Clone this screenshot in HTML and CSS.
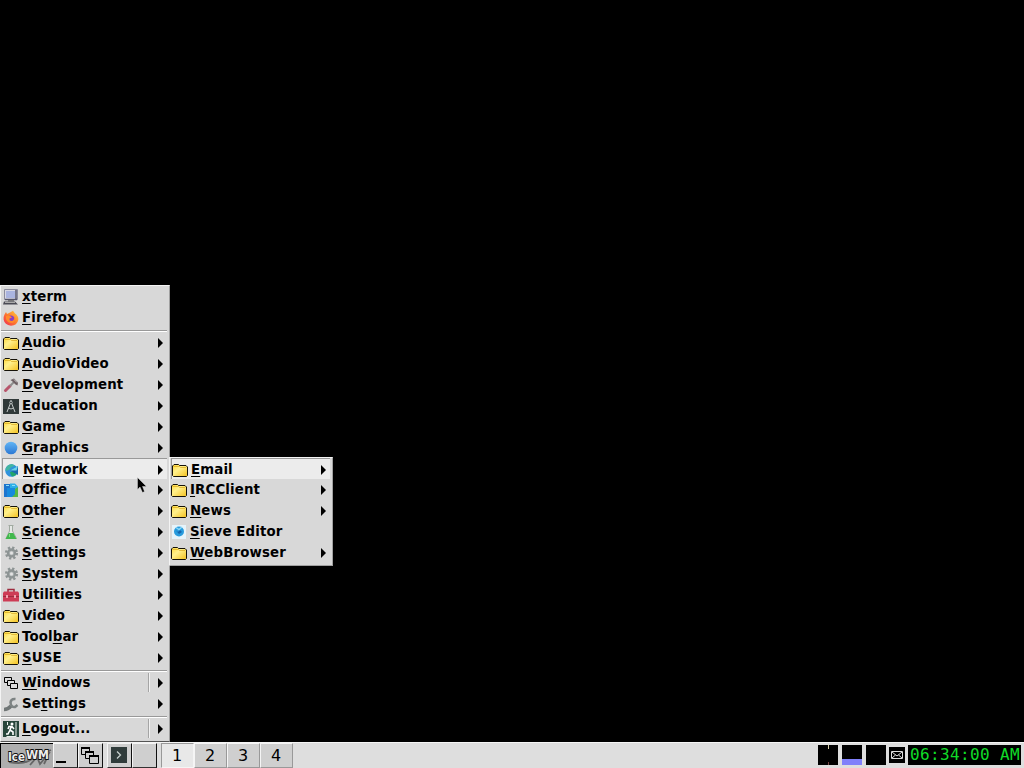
FILE: index.html
```html
<!DOCTYPE html>
<html lang="en">
<head>
    <meta charset="UTF-8">
    <meta name="viewport" content="width=device-width, initial-scale=1.0">
    <title>IceWM</title>
    <link rel="stylesheet" href="styles.css">
</head>
<body>

    <!-- Icon set -->
    <svg class="defs" width="0" height="0">
        <defs>
            <linearGradient id="yellow" x1="0" y1="0" x2="1" y2="1">
                <stop offset="0" stop-color="#ffd83a"/>
                <stop offset="0.4" stop-color="#fff08c"/>
                <stop offset="1" stop-color="#f4c01c"/>
            </linearGradient>
            <linearGradient id="blue" x1="0" y1="0" x2="0" y2="1">
                <stop offset="0" stop-color="#62b5f5"/>
                <stop offset="1" stop-color="#2b78d4"/>
            </linearGradient>
            <linearGradient id="fire" x1="1" y1="0" x2="0" y2="1">
                <stop offset="0" stop-color="#ffd33c"/>
                <stop offset="0.5" stop-color="#ff7a2c"/>
                <stop offset="1" stop-color="#ee2858"/>
            </linearGradient>
        </defs>
        <symbol id="folder" viewBox="0 0 16 16">
            <path d="M.5 13.500V4L2 2.500H6.500L7.500 3.500H14L15.500 5V13.500L14.500 14.500H1.500Z" fill="url(#yellow)" stroke="#15120a"/>
            <path d="M1.500 4.500H7.500L8.500 5.500H14" fill="none" stroke="#d9a81c" stroke-width=".700"/>
        </symbol>
        <symbol id="xterm" viewBox="0 0 16 16">
            <path d="M1.500.500H14.500V10.500H1.500Z" fill="#d8d8e4" stroke="#8b8b9c"/>
            <path d="M3 2H12V9H3Z" fill="#aab4e0"/>
            <path d="M13 1V10M2 10.500H14" stroke="#55556a" stroke-width="1.500"/>
            <path d="M5 11H11V12.500H5Z" fill="#777"/>
            <path d="M1 12.500H12L15 15.500H0Z" fill="#4a4a54"/>
            <path d="M2 13.500H12" stroke="#aaa"/>
        </symbol>
        <symbol id="firefox" viewBox="0 0 16 16">
            <path d="M1.500 4.500L3 2L4 4L7 2.500L10 .800L12 3.500Q15.800 6 15.300 10Q14 15.500 8 15.700Q1.500 15 .600 9.500Q.400 6.500 1.500 4.500Z" fill="url(#fire)"/>
            <circle cx="7.800" cy="9" r="3.600" fill="#8a3fc4"/>
            <path d="M3 6Q6 4.500 9 7.500L6.500 8.500Q6 11 9 11Q11.500 10.500 11 7Q13.500 11 9.500 13Q4.500 13.500 3 9Z" fill="#ff8a2c"/>
        </symbol>
        <symbol id="develop" viewBox="0 0 16 16">
            <path d="M2.500 13.500L7 9" stroke="#b8556c" stroke-width="3" stroke-linecap="round"/>
            <path d="M7 9L11 5" stroke="#8d8d8d" stroke-width="2"/>
            <path d="M7.500 3L11 1.500L15 5.500L14.500 8.500L12.500 7.500L9.500 4.500Z" fill="#6d6064"/>
            <path d="M11 2.500L14 5.500" stroke="#ccc"/>
        </symbol>
        <symbol id="education" viewBox="0 0 16 16">
            <path d="M0 1H16V16H0Z" fill="#303939"/>
            <path d="M8 2V4M7.500 5L4 14M8.500 5L12 14M5.500 10Q8 12 10.500 10" stroke="#c5caca" fill="none"/>
            <circle cx="8" cy="4.500" r="1.300" fill="#303939" stroke="#c5caca" stroke-width=".800"/>
        </symbol>
        <symbol id="graphics" viewBox="0 0 16 16">
            <circle cx="8" cy="8" r="6.300" fill="url(#blue)"/>
        </symbol>
        <symbol id="network" viewBox="0 0 16 16">
            <circle cx="7.500" cy="8.500" r="6.300" fill="#2f93dd"/>
            <path d="M1.500 7Q3 2.500 8 2L11 3.500L7 5.500L5 8L2 9Z" fill="#43b5a0"/>
            <path d="M8 14.500Q6 12 6 10L10 9L13.500 11Q12 14 8 14.500Z" fill="#22a56b"/>
            <path d="M6 8.500L14 4V13Z" fill="#1c6ab0"/>
            <path d="M6 8.500L14 4L12.500 8.500Z" fill="#6bd4ea"/>
        </symbol>
        <symbol id="office" viewBox="0 0 16 16">
            <path d="M1 2H7V15H1Z" fill="#1c75ce"/>
            <path d="M7 1.500H12L15 4.500V12H7Z" fill="#2daee8"/>
            <path d="M4 6H12V15H4Z" fill="#168ade"/>
            <path d="M12 7L15 5V15H9L12 12Z" fill="#55b846"/>
            <path d="M3 3.500H6M9 3.500H12" stroke="#8de0f6"/>
        </symbol>
        <symbol id="science" viewBox="0 0 16 16">
            <path d="M5.500 1.500H10.500M6.500 2V7L3 14.500H13.500L9.500 7V2" fill="#e6e9e6" stroke="#a1aaa1"/>
            <path d="M5.800 9H10.300L13.500 15H2.500Z" fill="#41b84d"/>
            <path d="M6.500 10V13" stroke="#83dc85"/>
        </symbol>
        <symbol id="gear" viewBox="0 0 16 16">
            <circle cx="8.500" cy="8" r="5.300" fill="none" stroke="#8d9494" stroke-width="2.600" stroke-dasharray="2.200 1.960"/>
            <circle cx="8.500" cy="8" r="3.500" fill="#b4baba" stroke="#8d9494" stroke-width="2.300"/>
            <circle cx="8.500" cy="8" r="1.500" fill="#e4e4e4"/>
        </symbol>
        <symbol id="toolbox" viewBox="0 0 16 16">
            <path d="M5 5V2.500H11V5" fill="none" stroke="#9d2b3e" stroke-width="1.500"/>
            <path d="M1 4.500H15L16 6V14.500H0V6Z" fill="#cd3c55"/>
            <path d="M0 9.500H16" stroke="#9d2b3e"/>
            <path d="M3 8H5V11H3ZM11 8H13V11H11Z" fill="#f0a3ae"/>
        </symbol>
        <symbol id="windows" viewBox="0 0 16 16">
            <path d="M1.500 2.500H8.500V7.500H1.500Z" fill="#ddd" stroke="#000"/>
            <path d="M4.500 5.500H11.500V10.500H4.500Z" fill="#ddd" stroke="#000"/>
            <path d="M7.500 8.500H14.500V13.500H7.500Z" fill="#ddd" stroke="#000"/>
        </symbol>
        <symbol id="wrench" viewBox="0 0 16 16">
            <path d="M1 13.500Q5 13.500 8 10" fill="none" stroke="#707676" stroke-width="3.500"/>
            <path d="M12.500 3Q8 2.500 7.500 6.500Q8 11.500 12 11L14.500 9" fill="none" stroke="#7d8383" stroke-width="2.500"/>
        </symbol>
        <symbol id="logout" viewBox="0 0 16 16">
            <path d="M0 0H16V16H0Z" fill="#28463b"/>
            <path d="M4.500 1V4M3.500 15.500H13.500M13 1V15" stroke="#e8eeea" fill="none"/>
            <circle cx="9" cy="3" r="1.500" fill="#fff"/>
            <path d="M8.500 5L7 9L10 11V14M7 9L5 13H3M5 8L6 5.500H9L11 8" stroke="#fff" stroke-width="1.600" fill="none"/>
        </symbol>
        <symbol id="sieve" viewBox="0 0 16 16">
            <path d="M1 1H15V15H1Z" fill="#e6f3fa"/>
            <circle cx="8" cy="7.500" r="5" fill="#279bdd"/>
            <path d="M4.500 6L7 8L9 6L11 8L8 10Z" fill="#1565ad"/>
            <path d="M5 3.500L8 5.500L11 3" stroke="#8bd8f8" stroke-width="1.500" fill="none"/>
        </symbol>
    </svg>

    <div class="desktop">

        <!-- Root menu -->
        <ul class="menu root-menu">
            <li class="item"><svg class="icon"><use href="#xterm"/></svg><span class="label"><u>x</u>term</span></li>
            <li class="item"><svg class="icon"><use href="#firefox"/></svg><span class="label"><u>F</u>irefox</span></li>
            <li class="separator"></li>
            <li class="item sub"><svg class="icon"><use href="#folder"/></svg><span class="label"><u>A</u>udio</span></li>
            <li class="item sub"><svg class="icon"><use href="#folder"/></svg><span class="label"><u>A</u>udioVideo</span></li>
            <li class="item sub"><svg class="icon"><use href="#develop"/></svg><span class="label"><u>D</u>evelopment</span></li>
            <li class="item sub"><svg class="icon"><use href="#education"/></svg><span class="label"><u>E</u>ducation</span></li>
            <li class="item sub"><svg class="icon"><use href="#folder"/></svg><span class="label"><u>G</u>ame</span></li>
            <li class="item sub"><svg class="icon"><use href="#graphics"/></svg><span class="label"><u>G</u>raphics</span></li>
            <li class="item sub active"><svg class="icon"><use href="#network"/></svg><span class="label"><u>N</u>etwork</span></li>
            <li class="item sub"><svg class="icon"><use href="#office"/></svg><span class="label"><u>O</u>ffice</span></li>
            <li class="item sub"><svg class="icon"><use href="#folder"/></svg><span class="label"><u>O</u>ther</span></li>
            <li class="item sub"><svg class="icon"><use href="#science"/></svg><span class="label"><u>S</u>cience</span></li>
            <li class="item sub"><svg class="icon"><use href="#gear"/></svg><span class="label"><u>S</u>ettings</span></li>
            <li class="item sub"><svg class="icon"><use href="#gear"/></svg><span class="label"><u>S</u>ystem</span></li>
            <li class="item sub"><svg class="icon"><use href="#toolbox"/></svg><span class="label"><u>U</u>tilities</span></li>
            <li class="item sub"><svg class="icon"><use href="#folder"/></svg><span class="label"><u>V</u>ideo</span></li>
            <li class="item sub"><svg class="icon"><use href="#folder"/></svg><span class="label">Tool<u>b</u>ar</span></li>
            <li class="item sub"><svg class="icon"><use href="#folder"/></svg><span class="label"><u>S</u>USE</span></li>
            <li class="separator"></li>
            <li class="item sub split"><svg class="icon"><use href="#windows"/></svg><span class="label"><u>W</u>indows</span></li>
            <li class="item sub"><svg class="icon"><use href="#wrench"/></svg><span class="label">Se<u>t</u>tings</span></li>
            <li class="separator"></li>
            <li class="item sub split"><svg class="icon"><use href="#logout"/></svg><span class="label"><u>L</u>ogout...</span></li>
        </ul>

        <!-- Network submenu -->
        <ul class="menu network-menu">
            <li class="item sub active"><svg class="icon"><use href="#folder"/></svg><span class="label"><u>E</u>mail</span></li>
            <li class="item sub"><svg class="icon"><use href="#folder"/></svg><span class="label"><u>I</u>RCClient</span></li>
            <li class="item sub"><svg class="icon"><use href="#folder"/></svg><span class="label"><u>N</u>ews</span></li>
            <li class="item"><svg class="icon"><use href="#sieve"/></svg><span class="label"><u>S</u>ieve Editor</span></li>
            <li class="item sub"><svg class="icon"><use href="#folder"/></svg><span class="label"><u>W</u>ebBrowser</span></li>
        </ul>

        <svg class="cursor" width="11" height="17" viewBox="0 0 11 17">
            <path d="M.500.500V12.500L3 10L5.500 15.500L7.500 14.500L5.500 9.500H9.500Z" fill="#000" stroke="#eee" stroke-width=".400"/>
        </svg>
    </div>

    <div class="taskbar">
        <div class="start">
            <svg width="47" height="22" viewBox="0 0 47 22">
                <path d="M3 17Q18 20 26 14Q34 9 45 5M24 20L31 12L34 19L44 7M38 19L41 13" fill="none" stroke="#666" stroke-width="1.800"/>
                <text class="logo" x="2" y="16" textLength="17" lengthAdjust="spacingAndGlyphs">Ice</text>
                <text class="logo" x="20" y="14" textLength="23" lengthAdjust="spacingAndGlyphs">WM</text>
            </svg>
        </div>
        <div class="tool"><svg width="23" height="23"><path d="M2 18H12" stroke="#000" stroke-width="2"/></svg></div>
        <div class="tool">
            <svg width="23" height="23">
                <path d="M2.500 3.500H10.500V10.500H2.500Z" fill="#d0d0d0" stroke="#000"/>
                <path d="M6.500 7.500H14.500V14.500H6.500Z" fill="#d0d0d0" stroke="#000"/>
                <path d="M10.500 11.500H19.500V19.500H10.500Z" fill="#d0d0d0" stroke="#000"/>
                <path d="M2 4H11M6 8H15M10 12H20" stroke="#000" stroke-width="2"/>
            </svg>
        </div>
        <div class="tool gap">
            <svg width="23" height="23">
                <path d="M3 3H19V19H3Z" fill="#303c3b"/>
                <path d="M9 7.500L12.500 11L9 14.500" fill="none" stroke="#c6d0cd" stroke-width="1.300"/>
            </svg>
        </div>
        <div class="tool"></div>
        <div class="workspaces">
            <div class="workspace current">1</div>
            <div class="workspace">2</div>
            <div class="workspace">3</div>
            <div class="workspace">4</div>
        </div>
        <div class="tray">
            <div class="monitor cpu"></div>
            <div class="monitor memory"></div>
            <div class="monitor"></div>
            <svg class="mail" width="16" height="16">
                <path d="M2.500 4.500H13.500V11.500H2.500ZM3 5L8 9L13 5M3 11L6.500 8M13 11L9.500 8" fill="none" stroke="#ddd"/>
            </svg>
            <div class="clock">06:34:00 AM</div>
        </div>
    </div>

</body>
</html>
```

FILE: styles.css
```css
body {
    margin: 0;
    height: 768px;
    background: #000;
    font-family: "DejaVu Sans", sans-serif;
    color: #000;
    display: flex;
    flex-direction: column;
    overflow: hidden;
}
.defs {
    position: absolute;
}
.desktop {
    flex: 1;
    position: relative;
}

/* Menus */
.menu {
    position: absolute;
    margin: 0;
    padding: 0 2px 2px 0;
    list-style: none;
    box-sizing: border-box;
    background: #d8d8d8;
    border-top: 1px solid #f4f4f4;
    border-left: 1px solid #f4f4f4;
    border-right: 1px solid #a0a0a0;
    border-bottom: 1px solid #a0a0a0;
}
.root-menu {
    left: 0;
    bottom: 0;
    width: 170px;
    height: 457px;
    border-bottom-color: #555;
}
.network-menu {
    left: 169px;
    top: 457px;
    width: 164px;
    height: 109px;
}
.item {
    display: flex;
    align-items: center;
    height: 21px;
    padding-left: 2px;
    box-sizing: border-box;
    font-size: 13.33px;
    font-weight: bold;
    letter-spacing: 0.13px;
}
.network-menu .item {
    padding-left: 1px;
}
.icon {
    width: 16px;
    height: 16px;
    margin: 0 3px 0 0;
    flex: none;
}
.label {
    flex: 1;
    line-height: 21px;
    white-space: nowrap;
}
.label u {
    text-decoration-thickness: 1px;
    text-underline-offset: 2px;
    text-decoration-skip-ink: none;
}
.sub::after {
    content: "";
    border: 5px solid transparent;
    border-left: 5px solid #000;
    border-right: 0;
    margin-right: 4px;
}
.active {
    margin-left: 1px;
    padding: 1px 0 0 1px;
    background: #ececec;
    border-top: 1px solid #999;
    border-left: 1px solid #999;
}
.network-menu .active {
    padding-left: 0;
}
.split .label {
    border-right: 1px solid #a5a5a5;
    box-shadow: 1px 0 #f2f2f2;
    margin-right: 9px;
    height: 19px;
    line-height: 19px;
}
.separator {
    height: 4px;
    padding-top: 2px;
    box-sizing: border-box;
}
.separator::before {
    content: "";
    display: block;
    height: 1px;
    background: #999;
    border-bottom: 1px solid #fff;
}
.cursor {
    position: absolute;
    left: 137px;
    top: 477px;
}

/* Taskbar */
.taskbar {
    display: flex;
    height: 26px;
    box-sizing: border-box;
    background: #dedede;
    border-top: 1px solid #f5f5f5;
}
.start {
    width: 53px;
    padding: 1px 0 0 5px;
    box-sizing: border-box;
    background: #aeaeae;
    border-left: 1px solid #000;
    border-top: 1px solid #000;
}
.start svg {
    display: block;
    overflow: visible;
}
.logo {
    font: bold 13px "DejaVu Sans", sans-serif;
    fill: #eee;
    stroke: #111;
    stroke-width: 2px;
    paint-order: stroke;
}
.tool {
    width: 25px;
    height: 25px;
    box-sizing: border-box;
    background: #cfcfcf;
    border: 1px solid #f5f5f5;
    border-right-color: #111;
    border-bottom-color: #333;
}
.tool svg {
    display: block;
}
.gap {
    margin-left: 4px;
}
.workspaces {
    display: flex;
    margin-left: 4px;
}
.workspace {
    width: 33px;
    height: 25px;
    padding-right: 1px;
    box-sizing: border-box;
    background: #cfcfcf;
    border: 1px solid #f5f5f5;
    border-right-color: #999;
    border-bottom-color: #999;
    font-size: 16px;
    line-height: 23px;
    text-align: center;
}
.current {
    background: #e8e8e8;
    border-color: #999 #f5f5f5 #f5f5f5 #999;
}
.tray {
    display: flex;
    align-items: center;
    margin-left: auto;
    padding: 0 3px 2px 0;
}
.monitor {
    width: 20px;
    height: 20px;
    margin-right: 4px;
    background: #000;
}
.cpu {
    background: linear-gradient(#d8cfa8, #d8cfa8) 10px 0 / 1px 4px no-repeat, linear-gradient(#744, #744) 10px 17px / 1px 3px no-repeat, #000;
}
.memory {
    background: linear-gradient(#000 14px, #8080fa 14px);
}
.mail {
    background: #000;
    margin: 0 3px 0 -1px;
}
.clock {
    width: 113px;
    height: 20px;
    box-sizing: border-box;
    padding-left: 2px;
    background: #000;
    color: #10dc28;
    font-family: "DejaVu Sans Mono", monospace;
    font-size: 16px;
    letter-spacing: 0.37px;
    line-height: 20px;
    white-space: nowrap;
}
```
